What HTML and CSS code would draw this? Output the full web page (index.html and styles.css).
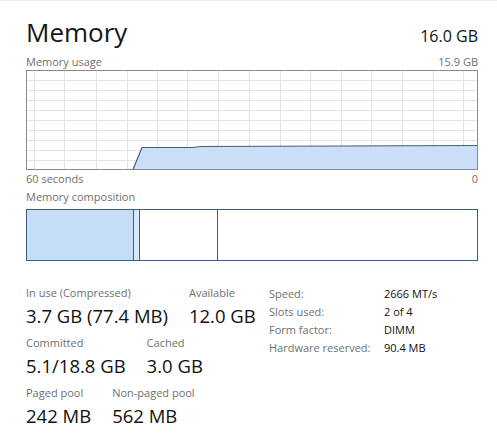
FILE: index.html
```html
<!DOCTYPE html>
<html>
<head>
<meta charset="utf-8">
<link rel="stylesheet" href="styles.css">
</head>
<body>
<div class="panel">
  <div class="header">
    <div class="title">Memory</div>
    <div class="total">16.0 GB</div>
  </div>
  <div class="caption-row top-caption">
    <span>Memory usage</span>
    <span>15.9 GB</span>
  </div>
  <svg class="chart" width="452" height="100" viewBox="0 0 452 100">
    <g stroke="#e4e4e4" stroke-width="1">
      <line x1="8.5" y1="0" x2="8.5" y2="100"/>
      <line x1="38.5" y1="0" x2="38.5" y2="100"/>
      <line x1="70.5" y1="0" x2="70.5" y2="100"/>
      <line x1="101.5" y1="0" x2="101.5" y2="100"/>
      <line x1="131.5" y1="0" x2="131.5" y2="100"/>
      <line x1="161.5" y1="0" x2="161.5" y2="100"/>
      <line x1="192.5" y1="0" x2="192.5" y2="100"/>
      <line x1="223.5" y1="0" x2="223.5" y2="100"/>
      <line x1="254.5" y1="0" x2="254.5" y2="100"/>
      <line x1="284.5" y1="0" x2="284.5" y2="100"/>
      <line x1="315.5" y1="0" x2="315.5" y2="100"/>
      <line x1="345.5" y1="0" x2="345.5" y2="100"/>
      <line x1="376.5" y1="0" x2="376.5" y2="100"/>
      <line x1="407.5" y1="0" x2="407.5" y2="100"/>
      <line x1="437.5" y1="0" x2="437.5" y2="100"/>
      <line x1="0" y1="10.5" x2="452" y2="10.5"/>
      <line x1="0" y1="20.5" x2="452" y2="20.5"/>
      <line x1="0" y1="30.5" x2="452" y2="30.5"/>
      <line x1="0" y1="40.5" x2="452" y2="40.5"/>
      <line x1="0" y1="50.5" x2="452" y2="50.5"/>
      <line x1="0" y1="60.5" x2="452" y2="60.5"/>
      <line x1="0" y1="70.5" x2="452" y2="70.5"/>
      <line x1="0" y1="80.5" x2="452" y2="80.5"/>
      <line x1="0" y1="90.5" x2="452" y2="90.5"/>
    </g>
    <polygon points="107,99 116,77.5 167,77.5 174,76.5 452,75.5 452,99" fill="#c5ddf7" fill-opacity="0.92"/>
    <polyline points="0,99.5 107,99.5 116,77.5 167,77.5 174,76.5 452,75.5" fill="none" stroke="#3c5f80" stroke-width="1.2"/>
    <rect x="0.5" y="0.5" width="451" height="99" fill="none" stroke="#8a8a8a" stroke-width="1"/>
  </svg>
  <div class="caption-row axis-row">
    <span>60 seconds</span>
    <span>0</span>
  </div>
  <div class="caption-row comp-caption">
    <span>Memory composition</span>
  </div>
  <div class="composition">
    <div class="seg seg-inuse"></div>
    <div class="seg seg-modified"></div>
    <div class="seg seg-standby"></div>
    <div class="seg seg-free"></div>
  </div>
  <div class="stats">
    <div class="stats-left">
      <div class="stat-row">
        <div class="stat"><div class="label">In use (Compressed)</div><div class="value">3.7 GB (77.4 MB)</div></div>
        <div class="stat"><div class="label">Available</div><div class="value">12.0 GB</div></div>
      </div>
      <div class="stat-row">
        <div class="stat"><div class="label">Committed</div><div class="value">5.1/18.8 GB</div></div>
        <div class="stat"><div class="label">Cached</div><div class="value">3.0 GB</div></div>
      </div>
      <div class="stat-row">
        <div class="stat"><div class="label">Paged pool</div><div class="value">242 MB</div></div>
        <div class="stat"><div class="label">Non-paged pool</div><div class="value">562 MB</div></div>
      </div>
    </div>
    <div class="stats-right">
      <div class="kv"><span class="k">Speed:</span><span class="v">2666 MT/s</span></div>
      <div class="kv"><span class="k">Slots used:</span><span class="v">2 of 4</span></div>
      <div class="kv"><span class="k">Form factor:</span><span class="v">DIMM</span></div>
      <div class="kv"><span class="k">Hardware reserved:</span><span class="v">90.4 MB</span></div>
    </div>
  </div>
</div>
</body>
</html>
```

FILE: styles.css
```css
html, body {
  margin: 0;
  padding: 0;
  background: #ffffff;
}
body {
  border-top: 1px solid #ececec;
  font-family: "Open Sans", "Noto Sans", sans-serif;
  color: #000;
}
.panel {
  width: 452px;
  padding: 18px 0 0 26px;
}
.header {
  display: flex;
  justify-content: space-between;
  align-items: baseline;
}
.title {
  font-size: 26px;
  line-height: 27px;
  color: #161616;
}
.total {
  font-size: 16px;
  line-height: 20px;
  color: #111;
}
.caption-row {
  display: flex;
  justify-content: space-between;
  font-size: 11px;
  line-height: 14px;
  color: #6f6f6f;
}
.top-caption {
  margin-top: 9px;
  margin-bottom: 1px;
}
.chart {
  display: block;
}
.axis-row {
  margin-top: 2px;
}
.comp-caption {
  margin-top: 4px;
}
.composition {
  margin-top: 5px;
  height: 50px;
  border: 1px solid #3d5f7e;
  display: flex;
}
.seg {
  height: 100%;
}
.seg-inuse {
  width: 106px;
  background: #c5ddf7;
  border-right: 1px solid #3d5f7e;
}
.seg-modified {
  width: 5px;
  background: #d6e7fa;
  border-right: 1px solid #3d5f7e;
}
.seg-standby {
  width: 77px;
  border-right: 1px solid #3d5f7e;
}
.seg-free {
  flex: 1;
}
.stats {
  display: flex;
  margin-top: 25px;
}
.stats-left {
  width: 243px;
}
.stat-row {
  display: flex;
  gap: 21px;
  margin-bottom: 8px;
}
.label {
  font-size: 11px;
  line-height: 14px;
  color: #6f6f6f;
}
.value {
  margin-top: 4px;
  font-size: 18.5px;
  line-height: 24px;
  color: #111;
}
.stats-right {
  margin-top: -1px;
}
.kv {
  display: flex;
  font-size: 11px;
  line-height: 18px;
}
.k {
  width: 115px;
  color: #6f6f6f;
}
.v {
  color: #111;
}
```
